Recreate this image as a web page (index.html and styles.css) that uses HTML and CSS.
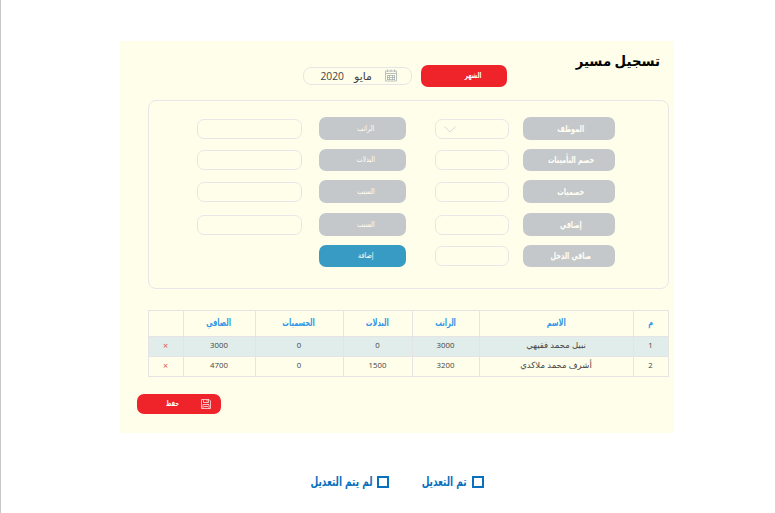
FILE: index.html
```html
<!DOCTYPE html>
<html lang="ar" dir="rtl">
<head>
<meta charset="utf-8">
<title>تسجيل مسير</title>
<link rel="stylesheet" href="styles.css">
</head>
<body>
<main class="panel">
  <header class="top">
    <h1>تسجيل مسير</h1>
    <div class="month">
      <span class="tag red"><b>الشهر</b></span>
      <div class="date">
        <svg class="calendar" viewBox="0 0 12 13"><path d="M.5 2h11v10H.5zM.5 4.500h11M2.500.5v2.500M6 .5v2.500M9.500.5v2.500M2 6.500h8M2 8.500h8M2 10.500h8M2.500 6v5M4.500 6v5M7.500 6v5M9.500 6v5"/></svg>
        <span class="name-month">مايو</span><span class="year">2020</span>
      </div>
    </div>
  </header>
  <form class="fields">
    <div class="row"><span class="tag"><b>الموظف</b></span><div class="box select"><svg viewBox="0 0 12 7"><path d="M.5.5 6 6 11.500.5"/></svg></div><span class="tag small"><b>الراتب</b></span><div class="box"></div></div>
    <div class="row"><span class="tag"><b>خصم التأمينات</b></span><div class="box"></div><span class="tag small"><b>البدلات</b></span><div class="box"></div></div>
    <div class="row"><span class="tag"><b>خصميات</b></span><div class="box"></div><span class="tag small"><b>السبب</b></span><div class="box"></div></div>
    <div class="row"><span class="tag"><b>إضافي</b></span><div class="box"></div><span class="tag small"><b>السبب</b></span><div class="box"></div></div>
    <div class="row"><span class="tag"><b>صافي الدخل</b></span><div class="box"></div><span class="tag small blue"><b>إضافة</b></span></div>
  </form>
  <table>
    <colgroup><col class="c-num"><col class="c-name"><col class="c-pay"><col class="c-allow"><col class="c-cut"><col class="c-net"><col class="c-del"></colgroup>
    <thead><tr><th><b>م</b></th><th><b>الاسم</b></th><th><b>الراتب</b></th><th><b>البدلات</b></th><th><b>الحسميات</b></th><th><b>الصافي</b></th><th></th></tr></thead>
    <tbody>
      <tr><td>1</td><td class="name">نبيل محمد فقيهي</td><td>3000</td><td>0</td><td>0</td><td>3000</td><td class="del">×</td></tr>
      <tr><td>2</td><td class="name">أشرف محمد ملاكدي</td><td>3200</td><td>1500</td><td>0</td><td>4700</td><td class="del">×</td></tr>
    </tbody>
  </table>
  <div class="save"><svg viewBox="0 0 10 10"><path d="M.5.5h7.500L9.500 2v7.500h-9zM2.500.5v3h5v-3M2 9.500v-4h6v4M3 7.500h4M6 1v1.500"/></svg><b>حفظ</b></div>
</main>
<footer class="checks">
  <label><i></i><b>تم التعديل</b></label>
  <label><i></i><b>لم يتم التعديل</b></label>
</footer>
</body>
</html>
```
FILE: styles.css
```css
* { box-sizing: border-box; }
body { margin: 0; height: 513px; overflow: hidden; background: #fff; border-left: 1px solid #c8c8c8; padding: 41px 101.500px 0 119px; font-family: "Open Sans", "DejaVu Sans", sans-serif; color: #444; }
svg { fill: none; stroke: currentColor; display: block; flex: none; }
.panel { height: 392px; background: #fffeeb; padding: 0 5px 0 28px; }
.top { height: 59px; display: flex; padding-right: 9px; }
h1 { margin: 8px 0 0; width: 84px; font-size: 14px; line-height: 24px; color: #000; white-space: nowrap; transform: scaleX(.95); transform-origin: right; }
.month { display: flex; align-items: center; gap: 9px; height: 22px; margin: 24px 68.500px 0 0; }
.tag { display: flex; align-items: center; justify-content: center; height: 22.500px; border-radius: 7px; background: #c5c8ca; color: #fffef5; font: bold 9.500px "DejaVu Sans", sans-serif; white-space: nowrap; padding: 0 0 1px 3px; }
.tag b { transform: scaleX(.68); font-weight: inherit; }
.tag.red { width: 86px; height: 22px; background: #ee242a; font-size: 8px; justify-content: flex-start; padding-right: 22px; }
.date { display: flex; align-items: center; width: 109px; height: 18px; border: 1px solid #e7e6e6; border-radius: 8px; padding-right: 14px; font-size: 10.500px; }
.calendar { width: 12px; height: 13px; color: #a9b2b2; stroke-width: .8; margin: 0 0 2px 13px; }
.name-month { font-size: 11px; margin-bottom: 2px; }
.year { margin-right: 10px; font-size: 10.300px; }
.fields { height: 189px; border: 1px solid #e7e6e8; border-radius: 8px; padding: 16px 52.500px 0 48px; display: grid; grid-template-rows: 31.500px 31.500px 33px 31.500px 23px; }
.row { display: grid; height: 23px; align-items: center; grid-template-columns: 92px 14.500px 74px 29px 87px 17px 105px; }
.row > :nth-child(1) { grid-column: 1; }
.row > :nth-child(2) { grid-column: 3; }
.row > :nth-child(3) { grid-column: 5; }
.row > :nth-child(4) { grid-column: 7; }
.tag.small { font-size: 8px; font-weight: normal; padding-left: 8px; }
.tag.small b { transform: scaleX(.79); }
.tag.blue { background: #389bc4; }
.box { height: 20px; border: 1px solid #e8e7e8; border-radius: 7px; }
.select { padding: 6px 0 0 8px; direction: ltr; }
.select svg { width: 12px; height: 7px; color: #d9dcdc; }
table { width: 520px; margin-top: 21px; border-collapse: collapse; table-layout: fixed; text-align: center; }
th, td { border: 1px solid #e5e3e4; padding: 0 0 3px; font-size: 7.800px; line-height: 12px; height: 20px; }
th { height: 26px; padding: 0 0 3px; font: bold 10px "DejaVu Sans", sans-serif; color: #3496e7; }
th b { display: inline-block; transform: scaleX(.66); }
tbody tr:first-child { background: #e0edeb; }
.c-num { width: 35px; } .c-name { width: 154px; } .c-pay { width: 67px; } .c-allow { width: 69px; } .c-cut { width: 88px; } .c-net { width: 72px; } .c-del { width: 35px; }
.name { font-size: 8.500px; }
.del { color: #ee5353; font-size: 9px; padding: 0 0 2px; }
.save { display: flex; align-items: center; width: 84px; height: 20px; margin: 16.500px auto 0 -11px; padding-right: 10px; border-radius: 7px; background: #ee242a; color: #fff; font: bold 8px "DejaVu Sans", sans-serif; }
.save svg { width: 10px; height: 10px; stroke-width: .7; margin-left: 22px; }
.save b { transform: scaleX(.65); transform-origin: right; }
.checks { display: flex; padding: 40px 189.500px 0 0; color: #0870bd; font: bold 13px "DejaVu Sans", sans-serif; }
.checks label { display: flex; align-items: center; gap: 5px; width: 95px; height: 17px; white-space: nowrap; }
.checks b { transform: scaleX(.685); transform-origin: right; }
.checks i { flex: none; width: 12px; height: 12px; border: 2px solid #0870bd; }
```
